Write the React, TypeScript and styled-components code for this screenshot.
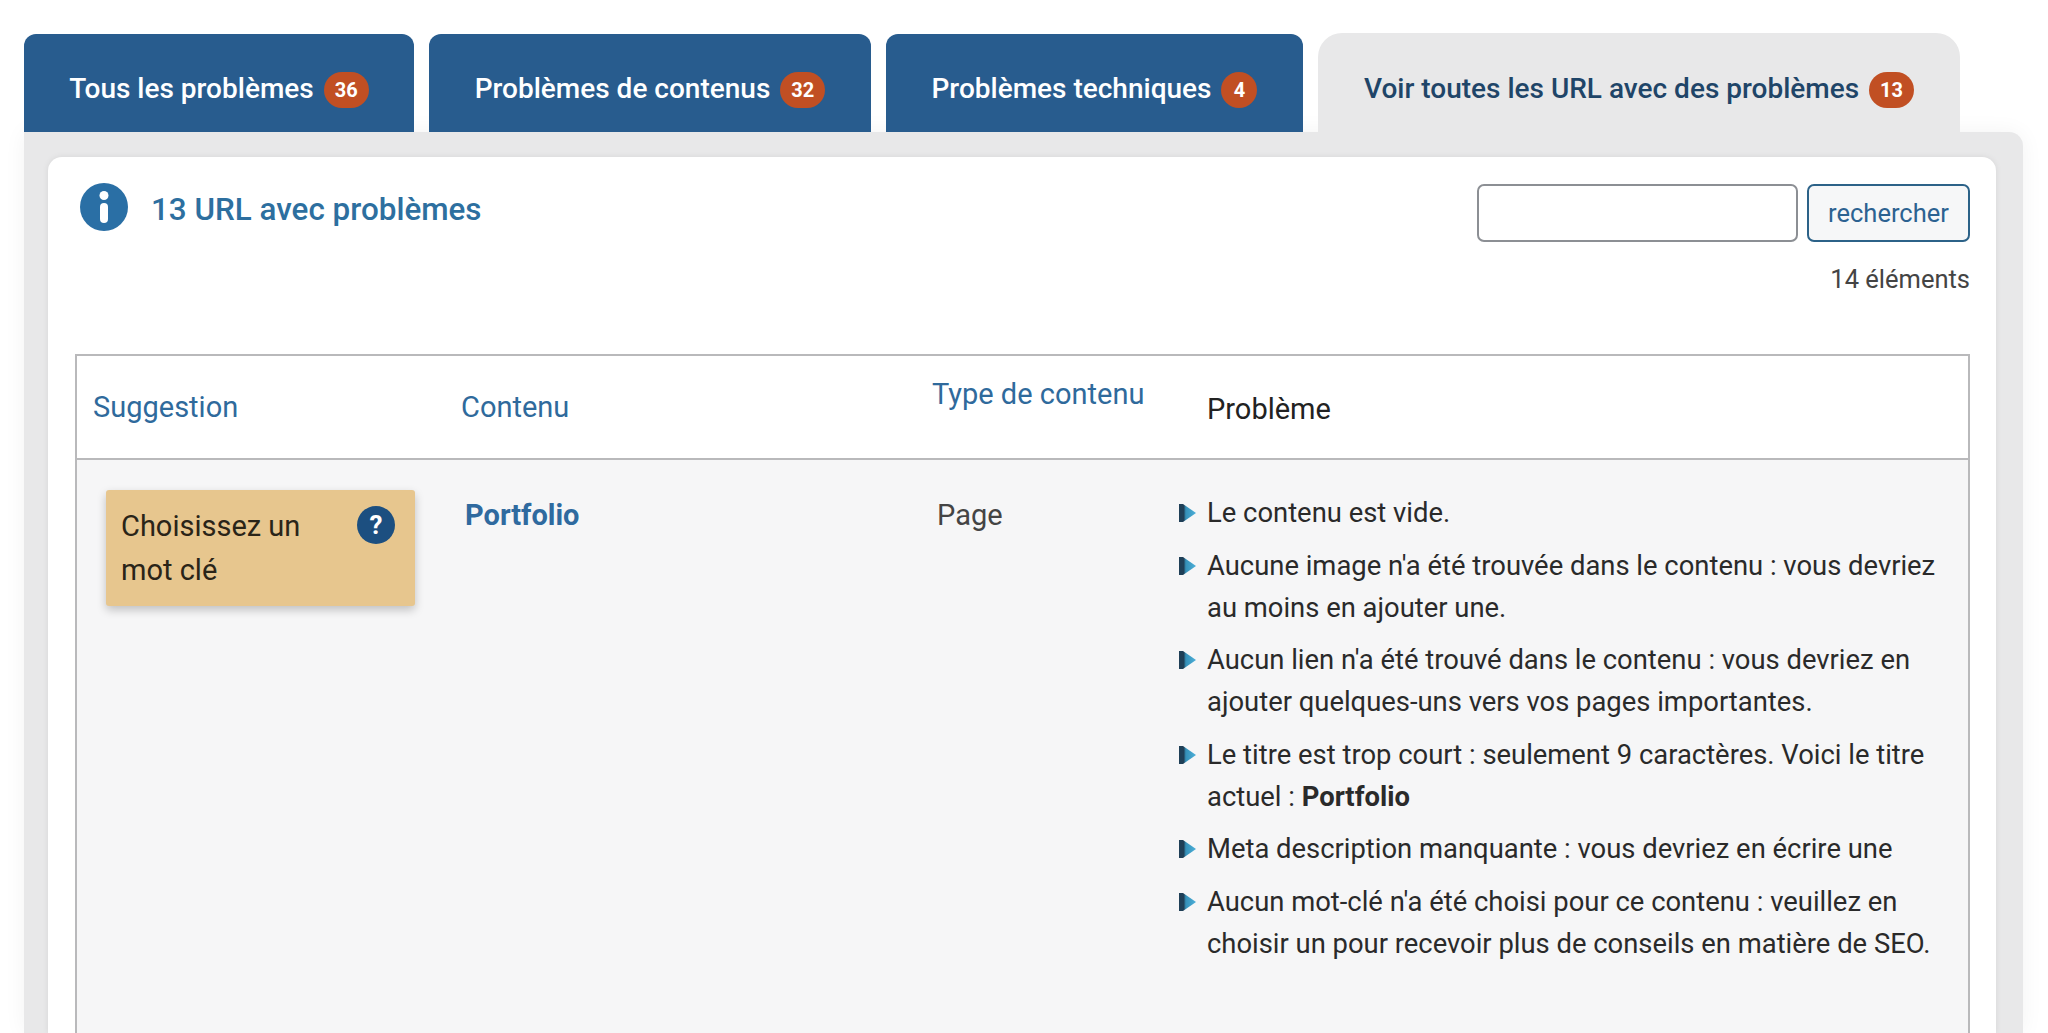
import React from "react";
import styled, { createGlobalStyle } from "styled-components";

const GlobalStyle = createGlobalStyle`
  html, body {
    margin: 0;
    padding: 0;
    background: #fff;
    height: 1033px;
    overflow: hidden;
  }
  body {
    font-family: Roboto, "Liberation Sans", sans-serif;
    color: #2c2c2c;
  }
`;

const Page = styled.div`
  height: 1033px;
  padding: 33px 0 0 24px;
  box-sizing: border-box;
  overflow: hidden;
`;

const TabBar = styled.div`
  display: flex;
  align-items: flex-end;
  gap: 15px;
`;

const Tab = styled.div<{ $active?: boolean; $width: number }>`
  width: ${(p) => p.$width}px;
  height: ${(p) => (p.$active ? 99 : 98)}px;
  box-sizing: border-box;
  display: flex;
  align-items: center;
  justify-content: center;
  gap: 10px;
  padding-top: ${(p) => (p.$active ? 11 : 10)}px;
  border-radius: ${(p) => (p.$active ? "24px 24px 0 0" : "12px 12px 0 0")};
  background: ${(p) => (p.$active ? "#e8e8e9" : "#285c8e")};
  color: ${(p) => (p.$active ? "#1f4568" : "#fff")};
  font-size: 28px;
  font-weight: 500;
`;

const Badge = styled.span`
  min-width: 36px;
  height: 36px;
  box-sizing: border-box;
  padding: 0 11px;
  margin-top: 4px;
  border-radius: 18px;
  display: inline-flex;
  align-items: center;
  justify-content: center;
  background: #c14f23;
  color: #fff;
  font-size: 20px;
  font-weight: 700;
`;

const Panel = styled.div`
  width: 1999px;
  height: 901px;
  box-sizing: border-box;
  padding: 25px 27px 0 24px;
  background: #e8e8e9;
  border-radius: 0 14px 0 0;
  box-shadow: 0 0 22px rgba(0, 0, 0, 0.05);
`;

const Card = styled.div`
  height: 100%;
  box-sizing: border-box;
  padding: 26px 26px 0 27px;
  background: #fff;
  border-radius: 14px 14px 0 0;
  box-shadow: 0 0 6px rgba(0, 0, 0, 0.08);
`;

const CardHead = styled.div`
  display: flex;
  justify-content: space-between;
  align-items: flex-start;
`;

const Title = styled.h2`
  margin: 0;
  display: flex;
  align-items: center;
  gap: 23px;
  padding-left: 5px;
  color: #2d6f9f;
  font-size: 31.4px;
  font-weight: 500;
`;

const TitleText = styled.span`
  margin-top: 4px;
`;

const SearchArea = styled.div`
  display: flex;
  flex-direction: column;
  align-items: flex-end;
  margin-top: 1px;
`;

const SearchRow = styled.div`
  display: flex;
  gap: 9px;
`;

const SearchInput = styled.input`
  width: 321px;
  height: 58px;
  box-sizing: border-box;
  border: 2px solid #8c8f94;
  border-radius: 7px;
  background: #fff;
  outline: none;
`;

const SearchButton = styled.button`
  width: 163px;
  height: 58px;
  box-sizing: border-box;
  border: 2px solid #2c6288;
  border-radius: 7px;
  background: #f6f7f8;
  color: #2c6291;
  font-family: inherit;
  font-size: 25.5px;
`;

const Count = styled.div`
  margin-top: 23px;
  font-size: 25.5px;
  line-height: 28px;
  color: #444;
`;

const Table = styled.div`
  margin-top: 61px;
  height: 700px;
  border: 2px solid #b9b9bb;
  border-bottom: 0;
  background: #f6f6f7;
`;

const HeaderRow = styled.div`
  display: grid;
  grid-template-columns: 384px 471px 275px 1fr;
  height: 102px;
  background: #fff;
  border-bottom: 2px solid #b9b9bb;
`;

const HeaderCell = styled.div<{ $dark?: boolean; $top: number; $left: number }>`
  padding: ${(p) => p.$top}px 0 0 ${(p) => p.$left}px;
  font-size: 29px;
  line-height: 36px;
  color: ${(p) => (p.$dark ? "#222" : "#2f6a9c")};
`;

const BodyRow = styled.div`
  display: grid;
  grid-template-columns: 384px 471px 246px 1fr;
  align-items: start;
  padding-top: 30px;
`;

const SuggestionCard = styled.div`
  width: 309px;
  height: 116px;
  margin-left: 29px;
  box-sizing: border-box;
  display: flex;
  justify-content: space-between;
  padding: 14px 20px 0 15px;
  background: #e7c68e;
  border-radius: 3px;
  box-shadow: 0 4px 10px rgba(0, 0, 0, 0.22);
  font-size: 29px;
  line-height: 44px;
  color: #2a2418;
`;

const SuggestionText = styled.div`
  width: 200px;
`;

const HelpIcon = styled.svg`
  width: 38px;
  height: 38px;
  flex: none;
  margin-top: 2px;
`;

const ContentLink = styled.a`
  margin: 7px 0 0 4px;
  font-size: 29px;
  line-height: 36px;
  font-weight: 700;
  color: #2f6a9f;
`;

const TypeCell = styled.div`
  margin: 7px 0 0 5px;
  font-size: 29px;
  line-height: 36px;
  color: #444;
`;

const IssueList = styled.ul`
  list-style: none;
  margin: 2px 0 0;
  padding: 0;
  display: flex;
  flex-direction: column;
  gap: 10.5px;
`;

const Issue = styled.li`
  display: flex;
  gap: 10px;
  font-size: 27.4px;
  line-height: 42px;
  color: #2a2a2a;
`;

const BulletIcon = styled.svg`
  width: 19px;
  height: 20px;
  flex: none;
  margin-top: 11px;
`;

const IssueText = styled.span`
  width: 740px;
`;

const Bullet = () => (
  <BulletIcon viewBox="0 0 19 20">
    <defs>
      <linearGradient id="bulletFill" x1="0" x2="1" y1="0" y2="0">
        <stop offset="0.28" stopColor="#1f3f57" />
        <stop offset="0.4" stopColor="#3590b8" />
        <stop offset="1" stopColor="#4cb0da" />
      </linearGradient>
    </defs>
    <polygon points="1,1 5,1 18,10 5,19 1,19" fill="url(#bulletFill)" />
  </BulletIcon>
);

const tabs = [
  { label: "Tous les problèmes", count: 36, width: 390 },
  { label: "Problèmes de contenus", count: 32, width: 442 },
  { label: "Problèmes techniques", count: 4, width: 417 },
  { label: "Voir toutes les URL avec des problèmes", count: 13, width: 642, active: true },
];

const issues: React.ReactNode[] = [
  "Le contenu est vide.",
  "Aucune image n'a été trouvée dans le contenu : vous devriez au moins en ajouter une.",
  "Aucun lien n'a été trouvé dans le contenu : vous devriez en ajouter quelques-uns vers vos pages importantes.",
  <>
    Le titre est trop court : seulement 9 caractères. Voici le titre actuel : <b>Portfolio</b>
  </>,
  "Meta description manquante : vous devriez en écrire une",
  "Aucun mot-clé n'a été choisi pour ce contenu : veuillez en choisir un pour recevoir plus de conseils en matière de SEO.",
];

const App = () => (
  <Page>
    <GlobalStyle />
    <TabBar>
      {tabs.map((t) => (
        <Tab key={t.label} $active={t.active} $width={t.width}>
          {t.label}
          <Badge>{t.count}</Badge>
        </Tab>
      ))}
    </TabBar>
    <Panel>
      <Card>
        <CardHead>
          <Title>
            <svg width="48" height="48" viewBox="0 0 48 48">
              <circle cx="24" cy="24" r="24" fill="#2a6fa5" />
              <circle cx="24" cy="12.5" r="4.5" fill="#fff" />
              <rect x="20" y="20" width="8" height="20" rx="4" fill="#fff" />
            </svg>
            <TitleText>13 URL avec problèmes</TitleText>
          </Title>
          <SearchArea>
            <SearchRow>
              <SearchInput />
              <SearchButton>rechercher</SearchButton>
            </SearchRow>
            <Count>14 éléments</Count>
          </SearchArea>
        </CardHead>
        <Table>
          <HeaderRow>
            <HeaderCell $top={33} $left={16}>Suggestion</HeaderCell>
            <HeaderCell $top={33} $left={0}>Contenu</HeaderCell>
            <HeaderCell $top={20} $left={0}>Type de contenu</HeaderCell>
            <HeaderCell $dark $top={35} $left={0}>Problème</HeaderCell>
          </HeaderRow>
          <BodyRow>
            <SuggestionCard>
              <SuggestionText>Choisissez un mot clé</SuggestionText>
              <HelpIcon viewBox="0 0 38 38">
                <circle cx="19" cy="19" r="19" fill="#1c4f80" />
                <text x="19" y="28" textAnchor="middle" fontSize="26" fontWeight="700" fill="#fff">?</text>
              </HelpIcon>
            </SuggestionCard>
            <ContentLink>Portfolio</ContentLink>
            <TypeCell>Page</TypeCell>
            <IssueList>
              {issues.map((issue, i) => (
                <Issue key={i}>
                  <Bullet />
                  <IssueText>{issue}</IssueText>
                </Issue>
              ))}
            </IssueList>
          </BodyRow>
        </Table>
      </Card>
    </Panel>
  </Page>
);

export default App;
